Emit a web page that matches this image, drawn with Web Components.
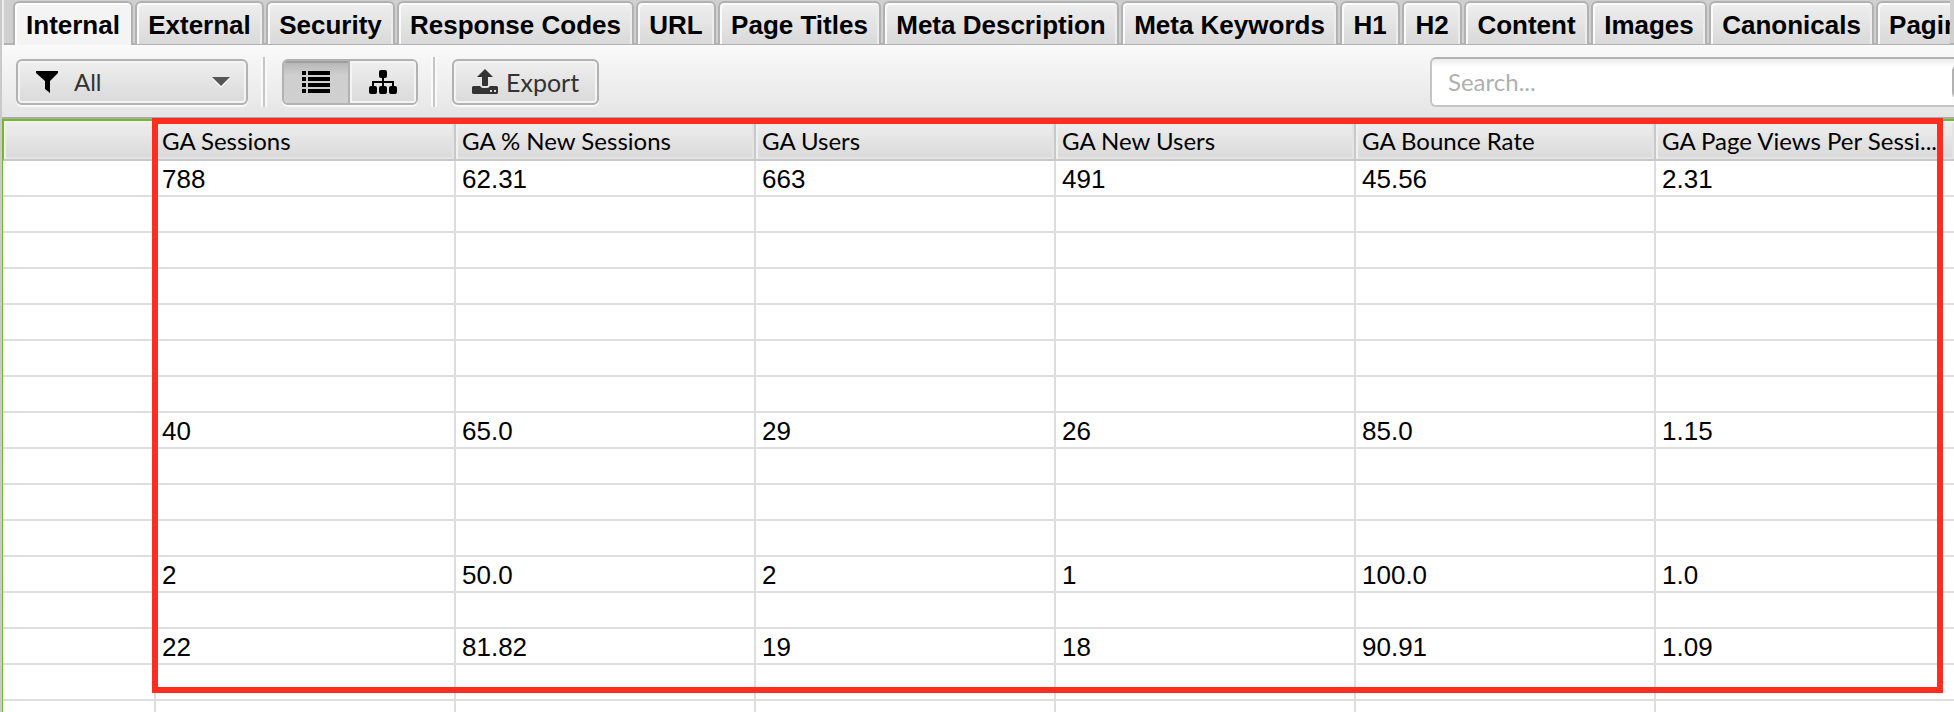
<!DOCTYPE html>
<html lang="en">
<head>
<meta charset="utf-8">
<title>SEO Spider</title>
<style>
  body {
    margin: 0;
    overflow: hidden;
    background: #fff;
    font-family: "Liberation Sans", Arial, sans-serif;
    --line: #b2b2b2;
    --grid: #dedede;
    --green: #76b82a;
    --red: #ff2d20;
    --ui-font: Lato, "Gill Sans", sans-serif;
  }
</style>
</head>
<body>
<spider-app></spider-app>

<script>
const template = html => {
  const el = document.createElement('template');
  el.innerHTML = html;
  return el;
};

class BaseElement extends HTMLElement {
  constructor () {
    super();
    this.attachShadow({ mode: 'open' });
    this.shadowRoot.appendChild(this.constructor.template.content.cloneNode(true));
  }
}

/****** Tabs ******/
class SpiderTab extends BaseElement {
  static template = template(`
<style>
  :host {
    display: block;
    flex: none;
  }

  button {
    display: block;
    box-sizing: border-box;
    height: 43px;
    padding: 2px 11px 0;
    border: 2px solid var(--line);
    border-bottom: 0;
    border-radius: 6px 6px 0 0;
    background: linear-gradient(#efefef, #d9d9d9);
    box-shadow: inset 2px 2px #fafafa, inset -2px 0 #ededed;
    font: bold 26px/34px "Liberation Sans", Arial, sans-serif;
    color: #000;
    white-space: nowrap;
  }

  :host([active]) button {
    height: 45px;
    padding-bottom: 2px;
    background: #f4f4f4;
    box-shadow: inset 2px 2px #fff;
  }
</style>
<button type="button" role="tab"><slot></slot></button>
`);

  // keep tab edges on whole pixels
  connectedCallback () {
    const button = this.shadowRoot.querySelector('button');
    button.style.width = Math.ceil(button.getBoundingClientRect().width) + 'px';
  }
}

class SpiderTabs extends BaseElement {
  static template = template(`
<style>
  :host {
    display: block;
    background: linear-gradient(var(--line), var(--line)) bottom / 100% 2px no-repeat #d0d0d0;
  }

  .tabs {
    display: flex;
    align-items: flex-start;
    gap: 2px;
    height: 44px;
    margin-right: 4px;
    padding: 1px 0 0 9px;
    border-left: 2px solid #eee;
    overflow: hidden;
  }
</style>
<div class="tabs" role="tablist"><slot></slot></div>
`);
}

/****** Toolbar ******/
class FilterSelect extends BaseElement {
  static template = template(`
<style>
  :host {
    display: flex;
    align-items: center;
    box-sizing: border-box;
    width: 232px;
    height: 46px;
    padding: 0 16px 0 18px;
    border: 2px solid var(--line);
    border-radius: 6px;
    background: linear-gradient(#efefef, #d9d9d9);
    box-shadow: inset 0 0 0 2px #f4f4f4, 0 2px #fafafa;
  }

  select {
    flex: 1;
    appearance: none;
    margin: 0 0 0 14px;
    padding: 0;
    border: 0;
    background: none;
    font: 24px/32px var(--ui-font);
    color: #333;
  }
</style>
<svg width="24" height="24" viewBox="0 0 24 24"><path d="M0 1h22v2l-8 8v12l-5-4v-8L0 3z"/></svg>
<select aria-label="Filter"><option>All</option></select>
<svg width="18" height="12" viewBox="0 0 18 12"><path d="M0 2h18l-9 10z" fill="#fff"/><path d="M0 1h18l-9 9z" fill="#555"/></svg>
`);
}

class ViewToggle extends BaseElement {
  static template = template(`
<style>
  :host {
    display: flex;
    box-sizing: border-box;
    height: 46px;
    border: 2px solid var(--line);
    border-radius: 6px;
    box-shadow: 0 2px #fafafa;
    overflow: hidden;
  }

  button {
    display: flex;
    align-items: center;
    justify-content: center;
    width: 66px;
    padding: 0;
    border: 0;
    background: linear-gradient(#efefef, #d9d9d9);
    box-shadow: inset 0 0 0 2px #f4f4f4;
  }

  .pressed {
    background: linear-gradient(#b4b4b4, #cfcfcf 14px, #d0d0d0);
    box-shadow: inset 0 2px #a0a0a0;
    border-right: 2px solid var(--line);
  }
</style>
<button type="button" class="pressed" aria-label="List view" aria-pressed="true">
  <svg width="30" height="24" viewBox="0 0 30 24"><path d="M1 1h4v4H1zM7 1h22v4H7zM1 7h4v4H1zM7 7h22v4H7zM1 13h4v4H1zM7 13h22v4H7zM1 19h4v4H1zM7 19h22v4H7z"/></svg>
</button>
<button type="button" aria-label="Tree view" aria-pressed="false">
  <svg width="30" height="26" viewBox="0 0 30 26"><path d="M5 18v-5h20v5M15 8v10" fill="none" stroke="#000" stroke-width="2"/><rect x="11" y="1" width="8" height="8" rx="2"/><rect x="1" y="17" width="8" height="8" rx="2"/><rect x="11" y="17" width="8" height="8" rx="2"/><rect x="21" y="17" width="8" height="8" rx="2"/></svg>
</button>
`);
}

class ExportButton extends BaseElement {
  static template = template(`
<style>
  :host {
    display: block;
  }

  button {
    display: flex;
    align-items: center;
    gap: 8px;
    height: 46px;
    padding: 0 18px;
    border: 2px solid var(--line);
    border-radius: 6px;
    background: linear-gradient(#efefef, #d9d9d9);
    box-shadow: inset 0 0 0 2px #f4f4f4, 0 2px #fafafa;
    font: 25px/32px var(--ui-font);
    color: #333;
  }
</style>
<button type="button">
  <svg width="26" height="26" viewBox="0 0 26 26" fill="#333"><path d="M13 0l8 8h-5v8q0 1-1 1h-4q-1 0-1-1V8H5z"/><path fill-rule="evenodd" d="M1.500 17H8q1 2 3 2h4q2 0 3-2h6.500q1.500 0 1.500 1.500v5q0 1.500-1.500 1.500h-23Q0 25 0 23.500v-5Q0 17 1.500 17zM18 21v2h2v-2zM22 21v2h2v-2z"/></svg>
  <slot></slot>
</button>
`);
}

class SearchBox extends BaseElement {
  static template = template(`
<style>
  :host {
    display: flex;
    align-items: center;
    box-sizing: border-box;
    width: 572px;
    height: 50px;
    padding: 0 14px 0 16px;
    border: 2px solid #c4c4c4;
    border-top-color: var(--line);
    border-radius: 6px;
    background: linear-gradient(#ececec, #fff 8px);
  }

  input {
    flex: 1;
    padding: 0;
    border: 0;
    outline: 0;
    background: none;
    font: 24px/32px var(--ui-font);
  }

  input::placeholder {
    color: #b0b0b0;
  }

  button {
    width: 34px;
    height: 34px;
    padding: 0;
    border: 2px solid var(--line);
    border-radius: 6px;
    background: #c0c0c0;
  }
</style>
<input type="search" placeholder="Search..." aria-label="Search">
<button type="button" aria-label="Search options"></button>
`);
}

class SpiderToolbar extends BaseElement {
  static template = template(`
<style>
  :host {
    display: flex;
    align-items: center;
    box-sizing: border-box;
    height: 74px;
    padding: 2px 0 0 14px;
    border-bottom: 2px solid #aaa;
    background: linear-gradient(#fafafa, #e5e5e5);
    overflow: hidden;
  }

  .divider {
    width: 2px;
    height: 50px;
    margin: 0 17px 0 15px;
    background: #c6c6c6;
    box-shadow: -2px 0 #fafafa, 2px 0 #fafafa;
  }

  /* the options button runs past the window edge */
  search-box {
    flex: none;
    margin: 0 -48px 0 auto;
  }
</style>
<filter-select></filter-select>
<span class="divider"></span>
<view-toggle></view-toggle>
<span class="divider"></span>
<export-button>Export</export-button>
<search-box></search-box>
`);
}

/****** Results grid ******/
const columns = ['GA Sessions', 'GA % New Sessions', 'GA Users', 'GA New Users', 'GA Bounce Rate', 'GA Page Views Per Sessi...'];

const results = {
  0: ['788', '62.31', '663', '491', '45.56', '2.31'],
  7: ['40', '65.0', '29', '26', '85.0', '1.15'],
  11: ['2', '50.0', '2', '1', '100.0', '1.0'],
  13: ['22', '81.82', '19', '18', '90.91', '1.09']
};

const rowCount = 16;

class ResultsGrid extends BaseElement {
  static template = template(`
<style>
  :host {
    display: block;
    position: relative;
    border-top: 2px solid var(--green);
    border-left: 1px solid var(--green);
  }

  .scroller {
    overflow: hidden;
  }

  table {
    width: 1953px;
    table-layout: fixed;
    border-collapse: separate;
    border-spacing: 0;
  }

  col:first-child {
    width: 153px;
  }

  th, td {
    box-sizing: border-box;
    padding: 2px 6px 0;
    border-right: 2px solid var(--grid);
    border-bottom: 2px solid var(--grid);
    text-align: left;
    white-space: nowrap;
    color: #000;
  }

  th {
    height: 40px;
    border-color: #c8c8c8;
    background: linear-gradient(#efefef, #d9d9d9);
    box-shadow: inset 2px 2px #f0f0f0, inset -2px -2px #e4e4e4;
    font: 24px/32px var(--ui-font);
  }

  th:first-child {
    border-left: 1px solid var(--green);
  }

  td {
    height: 36px;
    font-size: 26px;
    line-height: 32px;
  }

  /* marks the analytics columns, drawn over the grid */
  .highlight {
    position: absolute;
    top: -3px;
    left: 149px;
    right: 11px;
    height: 563px;
    border: 6px solid var(--red);
    pointer-events: none;
  }
</style>
<div class="scroller">
  <table>
    <colgroup><col><col span="6"></colgroup>
    <thead><tr></tr></thead>
    <tbody></tbody>
  </table>
</div>
<div class="highlight"></div>
`);

  connectedCallback () {
    const head = this.shadowRoot.querySelector('thead tr');
    const body = this.shadowRoot.querySelector('tbody');

    head.innerHTML = '<th></th>' + columns.map(name => `<th scope="col">${name}</th>`).join('');

    for (let i = 0; i < rowCount; i++) {
      const values = results[i] || columns.map(() => '');
      body.insertRow().innerHTML = '<td></td>' + values.map(value => `<td>${value}</td>`).join('');
    }
  }
}

class SpiderApp extends BaseElement {
  static template = template(`
<style>
  :host {
    display: block;
    height: 100vh;
    overflow: hidden;
    box-sizing: border-box;
    border-left: 2px solid #cacaca;
  }
</style>
<spider-tabs>
  <spider-tab active>Internal</spider-tab>
  <spider-tab>External</spider-tab>
  <spider-tab>Security</spider-tab>
  <spider-tab>Response Codes</spider-tab>
  <spider-tab>URL</spider-tab>
  <spider-tab>Page Titles</spider-tab>
  <spider-tab>Meta Description</spider-tab>
  <spider-tab>Meta Keywords</spider-tab>
  <spider-tab>H1</spider-tab>
  <spider-tab>H2</spider-tab>
  <spider-tab>Content</spider-tab>
  <spider-tab>Images</spider-tab>
  <spider-tab>Canonicals</spider-tab>
  <spider-tab>Pagination</spider-tab>
</spider-tabs>
<spider-toolbar></spider-toolbar>
<results-grid></results-grid>
`);
}

customElements.define('spider-tab', SpiderTab);
customElements.define('spider-tabs', SpiderTabs);
customElements.define('filter-select', FilterSelect);
customElements.define('view-toggle', ViewToggle);
customElements.define('export-button', ExportButton);
customElements.define('search-box', SearchBox);
customElements.define('spider-toolbar', SpiderToolbar);
customElements.define('results-grid', ResultsGrid);
customElements.define('spider-app', SpiderApp);
</script>
</body>
</html>
